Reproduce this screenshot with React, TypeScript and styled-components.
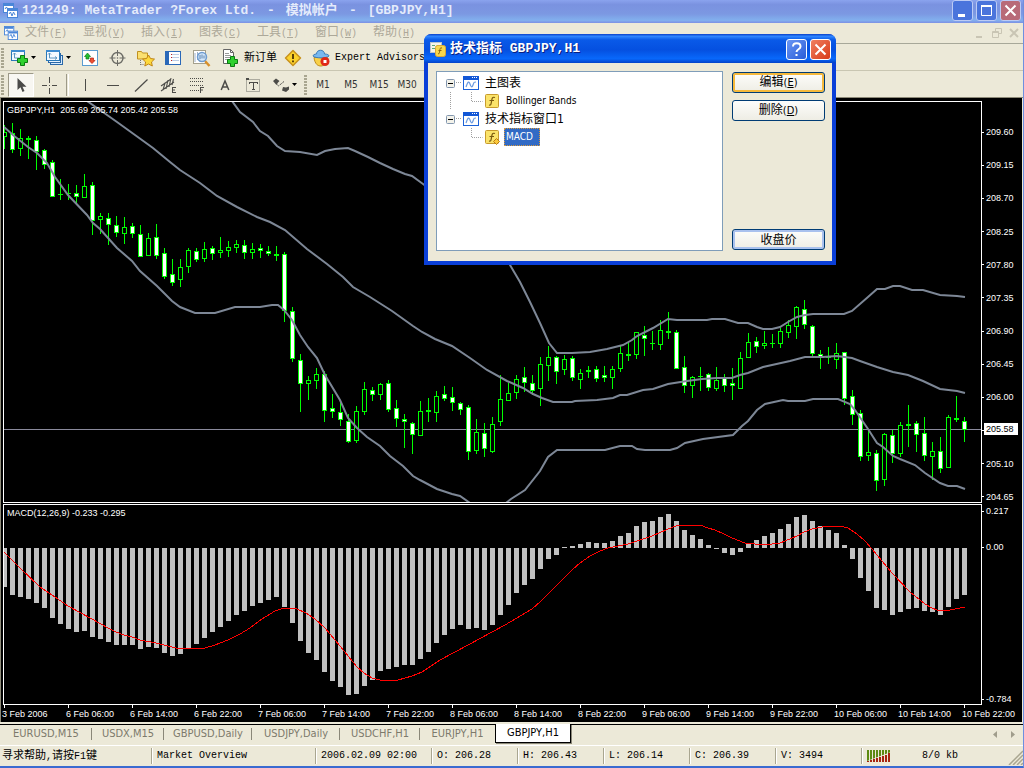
import React from "react";
import styled, { createGlobalStyle, css } from "styled-components";

const uiFont = '"DejaVu Sans Condensed", "Noto Sans CJK SC", sans-serif';
const chartFont = '"Liberation Sans", "Noto Sans CJK SC", sans-serif';
const monoFont = '"Liberation Mono", "Noto Sans CJK SC", monospace';
const face = "#ece9d8";
const bandColor = "#7d8796";
const lime = "#00ff00";

const GlobalStyle = createGlobalStyle`
  * { box-sizing: border-box; }
  html, body { margin: 0; padding: 0; background: ${face}; }
  body { font-family: ${uiFont}; font-size: 12px; line-height: 14px; color: #000; }
  button { font: inherit; color: inherit; margin: 0; padding: 0; border: 0; background: none; }
  ul { list-style: none; margin: 0; padding: 0; }
  svg { display: block; flex: none; }
`;

/* ---------- window shell ---------- */

const Shell = styled.div`
  position: relative;
  display: flex;
  flex-direction: column;
  width: 100%;
  overflow: hidden;
  background: ${face};
  border-right: 1px solid #6d8fe0;
  border-bottom: 3px solid #3a6bd0;
`;

const TitleBar = styled.header`
  display: flex;
  align-items: center;
  height: 23px;
  padding: 0 2px 2px 3px;
  color: #e4ebfb;
  background: linear-gradient(#8aa3ee 0, #7a92e0 20%, #7c98e2 60%, #82b0ee 88%, #7c90e4 100%);
`;

const TitleText = styled.h1`
  flex: 1;
  display: flex;
  gap: 11px;
  margin: 0 0 0 4px;
  font: bold 13px/18px ${monoFont};
  white-space: pre;
`;

const CaptionButton = styled.button<{ $tone: string; $edge?: string }>`
  display: flex;
  align-items: center;
  justify-content: center;
  width: 21px;
  height: 21px;
  margin-left: 3px;
  border: 1px solid ${(p) => p.$edge ?? "#bccbf5"};
  border-radius: 3px;
  background: ${(p) => p.$tone};
`;

const MenuBar = styled.nav`
  display: flex;
  align-items: center;
  height: 21px;
  padding: 0 4px;
  border-bottom: 1px solid #a7a899;
  color: #aca899;
`;

const MenuIconBox = styled.span`
  display: flex;
  width: 13px;
`;

const MenuItem = styled.button`
  width: 58px;
  padding-left: 8px;
  text-align: left;
  font: 12px/18px ${monoFont};
  white-space: nowrap;
`;

const Latin = styled.span`
  font-size: 10px;
`;

const Spacer = styled.span`
  flex: 1;
`;

const MdiButtons = styled.span`
  display: flex;
  gap: 7px;
  color: #c9c5b4;
`;

/* ---------- toolbars ---------- */

const Toolbar = styled.div<{ $line?: boolean }>`
  display: flex;
  align-items: center;
  gap: 4px;
  height: 27px;
  padding: 1px 0 0 1px;
  border-bottom: 1px solid ${(p) => (p.$line ? "#c9c6b2" : "#8d8a78")};
  white-space: nowrap;
`;

const Handle = styled.span`
  flex: none;
  width: 3px;
  height: 20px;
  background: repeating-linear-gradient(#a9a690 0 2px, ${face} 2px 3px);
`;

const Divider = styled.span`
  flex: none;
  width: 3px;
  height: 22px;
  border-right: 1px solid #fff;
  border-left: 1px solid #9d9a88;
`;

const ToolButton = styled.button<{ $on?: boolean; $label?: boolean }>`
  flex: none;
  display: flex;
  align-items: center;
  justify-content: ${(p) => (p.$label ? "flex-start" : "center")};
  gap: ${(p) => (p.$label ? 5 : 2)}px;
  min-width: 24px;
  height: 24px;
  padding: ${(p) => (p.$label ? "0 0 0 3px" : "0 3px")};
  font: 10px/16px ${monoFont};
  color: #000;
  ${(p) =>
    p.$on &&
    css`
      background: #f8f7f2;
      border: 1px solid #9d9a88;
      border-right-color: #fff;
      border-bottom-color: #fff;
    `}
`;

const PeriodButton = styled(ToolButton)`
  font: 10px/16px ${uiFont};
  color: #333;
  padding: 0;
`;

const Cjk = styled.span`
  font-size: 11px;
`;

/* ---------- chart ---------- */

const ChartArea = styled.main`
  display: flex;
  flex-direction: column;
  gap: 1px;
  margin: 0 1px 0 0;
  padding: 3px 0 0 2px;
  border-left: 1px solid #8d8a78;
  background: #000;
  color: #fff;
  font: 9px/12px ${chartFont};
`;

const Pane = styled.section`
  display: flex;
`;

const Plot = styled.div`
  position: relative;
  flex: 1;
  min-width: 0;
  border: 1px solid #fff;
  svg { width: 100%; }
`;

const PlotCaption = styled.p`
  position: absolute;
  top: 2px;
  left: 3px;
  margin: 0;
  white-space: pre;
`;

const Axis = styled.div<{ $top: number }>`
  position: relative;
  flex: none;
  display: flex;
  flex-direction: column;
  justify-content: space-between;
  width: 40px;
  padding-top: ${(p) => p.$top}px;
`;

const AxisLabel = styled.span`
  display: flex;
  align-items: center;
  gap: 2px;
  height: 12px;
  &::before {
    content: "";
    width: 2px;
    height: 1px;
    background: #fff;
  }
`;

const PriceBadge = styled.span`
  position: absolute;
  left: 2px;
  top: 322px;
  width: 34px;
  height: 12px;
  padding-left: 2px;
  background: #fff;
  color: #000;
`;

const ScaleGap = styled.span<{ $grow: number }>`
  flex: ${(p) => p.$grow} 0 0;
`;

const TimeAxis = styled.ol`
  display: flex;
  height: 17px;
  margin: -1px 0 0 -1px;
  padding: 0;
  list-style: none;
  overflow: hidden;
`;

const TimeTick = styled.li`
  flex: none;
  width: 64px;
  white-space: nowrap;
  &::before {
    content: "";
    display: block;
    width: 1px;
    height: 3px;
    margin-left: 2px;
    background: #fff;
  }
  &:last-child { width: auto; }
`;

/* ---------- bottom bars ---------- */

const TabBar = styled.div`
  display: flex;
  align-items: flex-start;
  height: 22px;
  margin-top: 2px;
  border-top: 1px solid #000;
  border-bottom: 1px solid #fff;
  font-size: 11px;
`;

const Tab = styled.button<{ $w: number; $active?: boolean }>`
  flex: none;
  width: ${(p) => p.$w}px;
  height: 18px;
  text-align: center;
  white-space: nowrap;
  color: #7d7a6c;
  background: linear-gradient(#8a8778, #8a8778) right 3px / 1px 12px no-repeat;
  &:nth-last-child(4) { background: none; }
  ${(p) =>
    p.$active &&
    css`
      height: 19px;
      margin-top: -1px;
      color: #000;
      background: #fff;
      border: 1px solid #000;
      border-top: 0;
      box-shadow: 1px 1px 0 #8a8778;
    `}
`;

const TabScroll = styled.span`
  display: flex;
  gap: 12px;
  padding: 6px 8px 0 0;
`;

const StatusBar = styled.footer`
  display: flex;
  align-items: center;
  height: 20px;
  font: 10px/16px ${monoFont};
  white-space: nowrap;
`;

const StatusCell = styled.span<{ $w: number }>`
  flex: none;
  width: ${(p) => p.$w}px;
  height: 16px;
  padding-left: 5px;
  border-right: 1px solid #a9a690;
  box-shadow: 1px 0 0 #fff;
  &:first-child { padding-left: 2px; }
`;

const Traffic = styled.span`
  flex: 1;
  display: flex;
  align-items: center;
  gap: 31px;
  padding-left: 5px;
`;

/* ---------- dialog ---------- */

const Dialog = styled.section`
  position: absolute;
  left: 424px;
  top: 34px;
  width: 412px;
  border: 4px solid #0a3fd8;
  border-top: 0;
  border-radius: 8px 8px 0 0;
  background: ${face};
`;

const DialogTitle = styled.header`
  display: flex;
  align-items: center;
  height: 29px;
  margin: 0 -4px;
  padding: 1px 5px 0 6px;
  border-radius: 7px 7px 0 0;
  color: #fff;
  background: linear-gradient(#0a3fc8 0, #2f86ff 8%, #0a5ae8 20%, #0550e0 55%, #0868fb 85%, #0342c8 100%);
`;

const DialogHeading = styled.h2`
  flex: 1;
  margin: 0 0 0 4px;
  font: bold 13px/20px ${monoFont};
  text-shadow: 1px 1px 0 #0a1f80;
`;

const DialogBody = styled.div`
  display: flex;
  gap: 9px;
  padding: 8px 7px 10px 8px;
`;

const Tree = styled.ul`
  flex: 1;
  height: 180px;
  border: 1px solid #7f9db9;
  background: #fff;
  &::before {
    content: "";
    display: block;
    height: 2px;
  }
`;

const TreeRow = styled.div`
  display: flex;
  align-items: center;
  height: 18px;
`;

const Expander = styled.button`
  display: block;
  width: 9px;
  height: 9px;
  margin-left: 9px;
`;

const NodeLabel = styled.span<{ $selected?: boolean; $child?: boolean }>`
  margin-left: ${(p) => (p.$child ? 4 : 6)}px;
  font-size: ${(p) => (p.$child ? 10 : 12)}px;
  padding: ${(p) => (p.$child ? "1px 6px 1px 1px" : "0")};
  border: ${(p) => (p.$child ? "1px dotted transparent" : "0")};
  ${(p) =>
    p.$selected &&
    css`
      color: #fff;
      background: #316ac5;
      border-color: #d89a40;
    `}
`;

const Actions = styled.div`
  display: flex;
  flex-direction: column;
  gap: 7px;
  width: 93px;
  padding: 1px 0;
`;

const ActionButton = styled.button<{ $ring?: string }>`
  height: 21px;
  border: 1px solid #003c74;
  border-radius: 3px;
  background: linear-gradient(#fdfdfb, #eeede4);
  box-shadow: inset 0 0 0 2px ${(p) => p.$ring ?? "transparent"};
`;

const KeyHint = styled.span`
  font-size: 11px;
`;

/* ---------- icons ---------- */

const ChartsLogo = ({ size = 15 }: { size?: number }) => (
  <svg width={size} height={size} viewBox="0 0 15 15" fill="#fff" stroke="#4a86d8">
    <rect x="0.5" y="0.5" width="10" height="9" />
    <path d="M1 2h9" strokeWidth="2" />
    <path d="M2 6l1.500-2 1.500 3 1.500-2" fill="none" />
    <rect x="4.500" y="5.500" width="10" height="9" />
    <path d="M5 7h9" strokeWidth="2" />
    <path d="M6 11l1.500-2 1.500 4 1.500-4 1.500 3" fill="none" />
  </svg>
);

const Caret = () => (
  <svg width="5" height="3" viewBox="0 0 5 3"><path d="M0 0h5L2.500 3z" /></svg>
);

const Plus = ({ x, y }: { x: number; y: number }) => (
  <path
    transform={`translate(${x} ${y})`}
    d="M3.500.5h4v3h3v4h-3v3h-4v-3h-3v-4h3z"
    fill="#2fd02f"
    stroke="#0b7a12"
  />
);

const Icon = ({ children, size = 18 }: { children: React.ReactNode; size?: number }) => (
  <svg width={size} height={size} viewBox="0 0 18 18" fill="none">{children}</svg>
);

const NewChartIcon = () => (
  <Icon>
    <rect x="0.5" y="1.500" width="13" height="10" fill="#f4f9ff" stroke="#2a78b8" />
    <path d="M0 2h14" stroke="#3c8ad0" strokeWidth="2" />
    <path d="M3.500 4v5h8M2 5.500l1.500-1.500L5 5.500" stroke="#5a94c0" />
    <Plus x={6} y={6} />
  </Icon>
);
const ProfilesIcon = () => (
  <Icon>
    <rect x="4.500" y="6.500" width="12" height="9" fill="#d8eafc" stroke="#2a68a8" />
    <rect x="2.500" y="4.500" width="12" height="9" fill="#e8f3ff" stroke="#2a68a8" />
    <rect x="0.5" y="1.500" width="13" height="10" fill="#f4f9ff" stroke="#2a78b8" />
    <path d="M0 2h14" stroke="#3c8ad0" strokeWidth="2" />
    <path d="M3.500 4v5h7M2 5.500l1.500-1.500L5 5.500M9 7.500l2 1.500-2 1.500" stroke="#5a94c0" />
  </Icon>
);
const MarketWatchIcon = () => (
  <Icon>
    <rect x="1.500" y="1.500" width="15" height="15" fill="#fff" stroke="#5a9cd0" />
    <path d="M6.500 4l3 3.500H8V10H5V7.500H3.500z" fill="#20c030" stroke="#0f7a1c" strokeWidth=".7" />
    <path d="M11 14.500L8 11.500h1.500V9h3v2.500H14z" fill="#f05030" stroke="#b02010" strokeWidth=".7" />
  </Icon>
);
const TargetIcon = () => (
  <Icon>
    <circle cx="8.500" cy="9" r="5.500" stroke="#6c6c66" strokeWidth="1.400" />
    <path d="M8.500 1v6M8.500 11v6M.5 9h6M10.500 9h6" stroke="#6c6c66" />
    <circle cx="8.500" cy="9" r=".8" fill="#6c6c66" />
  </Icon>
);
const NavigatorIcon = () => (
  <Icon>
    <path d="M.5 2.500h4l1 1.500h5v6h-10z" fill="#fbe070" stroke="#c09020" />
    <path d="M3.500 11v5M3.500 15.500h4" stroke="#777" strokeDasharray="1 1" />
    <path d="M11.500 6l2 3.500 4 .6-3 2.900.8 4-3.800-2-3.700 2 .8-4-3-2.900 4-.6z" fill="#fdd93c" stroke="#c08414" />
  </Icon>
);
const TerminalIcon = () => (
  <Icon>
    <rect x="0.5" y="2.500" width="15" height="13" fill="#fff" stroke="#2a68b8" />
    <path d="M2.500 3v12" stroke="#2a68b8" strokeWidth="3" />
    <path d="M6 5.500h8M6 8.500h8M6 11.500h8" stroke="#b9cbe4" />
    <path d="M6 5.500h1M6 8.500h1M6 11.500h1" stroke="#c02020" />
  </Icon>
);
const TesterIcon = () => (
  <Icon>
    <rect x="0.5" y="1.500" width="12" height="13" fill="#fff" stroke="#a4a08c" />
    <path d="M2 4v9M4.500 3v8M7 5v8" stroke="#9cb0c8" />
    <path d="M12 12l4.500 5" stroke="#d8902c" strokeWidth="2.500" />
    <circle cx="9" cy="8" r="4.500" fill="#cfe5fa" fillOpacity=".85" stroke="#6f9cd0" strokeWidth="1.500" />
    <path d="M7 6v4M9 5.500v4M11 6.500v3" stroke="#5c84b0" />
  </Icon>
);
const NewOrderIcon = () => (
  <Icon>
    <path d="M2.500.5h7l3 3v11h-10z" fill="#fff" stroke="#666" />
    <path d="M9.500.5v3h3" stroke="#666" />
    <path d="M4 4.500h4M4 6.500h6M4 8.500h6M4 10.500h3" stroke="#999" />
    <Plus x={6} y={7} />
  </Icon>
);
const WarningIcon = () => (
  <Icon>
    <path d="M9 1.500L16.500 9 9 16.500 1.500 9z" fill="#fbd22c" stroke="#c8921c" strokeWidth="1.500" strokeLinejoin="round" />
    <path d="M9 5v5M9 11.500v1.800" stroke="#5c4008" strokeWidth="2" />
  </Icon>
);
const ExpertIcon = () => (
  <Icon>
    <path d="M2 8.500c1 7 4 8.500 7 8.500s5.500-3 6.500-8.500z" fill="#f8d048" stroke="#c08c1c" />
    <path d="M4.500 5c0-5 8-5 8 0 3 0 4.500 1 4.500 2-2 2.500-14 2.500-16 0 0-1 1.500-2 3.500-2z" fill="#78b8f0" stroke="#3c7cb8" />
    <circle cx="13" cy="12.500" r="4.500" fill="#e02818" />
    <rect x="11.500" y="11" width="3" height="3" fill="#fff" />
  </Icon>
);
const CursorIcon = () => (
  <Icon><path d="M5.500 2v12l3-2.800L10.500 16l2-1-2-4.300h4z" fill="#4a4a48" /></Icon>
);
const CrosshairIcon = () => (
  <Icon><path d="M8.500 1v6M8.500 12v6M1 9.500h5M11 9.500h5M8 9.500h1" stroke="#4c4c48" /></Icon>
);
const VLineIcon = () => <Icon><path d="M9.500 3v12" stroke="#4c4c48" /></Icon>;
const HLineIcon = () => <Icon><path d="M3 9.500h12" stroke="#4c4c48" /></Icon>;
const TrendIcon = () => <Icon><path d="M3 15.500L15.500 3.500" stroke="#4c4c48" strokeWidth="1.200" /></Icon>;
const ChannelIcon = () => (
  <Icon>
    <path d="M1 10l10-7M1 15l13-9M3 14l2-7M6 13l2-9M9 11l2-9M12 9l1.500-6" stroke="#4c4c48" strokeWidth="1.100" />
    <path d="M12.500 11v6M12 11.500h4M12 14h3M12 16.500h4" stroke="#4c4c48" />
  </Icon>
);
const FiboIcon = () => (
  <Icon>
    <path d="M2 2.500h14M2 5.500h14M2 9.500h14M2 14.500h9" stroke="#4c4c48" strokeDasharray="1 1" />
    <path d="M12.500 11v6M12 11.500h4M12 14h3" stroke="#4c4c48" />
  </Icon>
);
const TextIcon = () => (
  <Icon><path d="M5.200 14L9 5l3.800 9M6.500 11h5" stroke="#4c4c48" strokeWidth="1.500" /></Icon>
);
const LabelIcon = () => (
  <Icon>
    <rect x="2.500" y="3.500" width="13" height="12" stroke="#6c6c66" strokeDasharray="1 1" />
    <path d="M2 3h3" stroke="#4c4c48" strokeWidth="2" />
    <path d="M5.500 6.500h8M9.500 6v8M8 13.500h3M5.500 6v2M13.500 6v2" stroke="#4c4c48" />
  </Icon>
);
const ArrowsIcon = () => (
  <Icon>
    <path d="M1 5l3-2.500L7.500 5 6 6.500 4.500 9z" fill="#4c4c48" />
    <path d="M4 7l2.500 3L12 5.500" stroke="#4c4c48" strokeDasharray="2 1" />
    <path d="M11 11l3 .5 3-1v3l-3 2.500-4-1.500z" fill="#4c4c48" />
  </Icon>
);
const WindowNodeIcon = () => (
  <svg width="16" height="14" viewBox="0 0 16 14" fill="none">
    <rect x="0.5" y="0.5" width="15" height="13" fill="#fff" stroke="#1c62d8" />
    <path d="M0 2h16" stroke="#1257d6" strokeWidth="4" />
    <path d="M9 1.500h1M11 1.500h1M13 1.500h1" stroke="#fff" />
    <path d="M3 11c2-6 3-6 4-3s2 4 3 1 1-3 3-3" stroke="#6b9be0" strokeWidth="1.200" />
  </svg>
);
const FunctionIcon = ({ custom }: { custom?: boolean }) => (
  <svg width="15" height="15" viewBox="0 0 15 15" fill="none">
    <rect x="0.5" y="0.5" width="13" height="13" rx="1" fill="#fbe36a" stroke="#c79a2c" />
    <path d="M10 3.500c-3-1-3 1-3.500 4s-.5 4-2.500 3.500M4.500 6.500h4.500" stroke="#7a5a10" strokeWidth="1.200" />
    {custom && <path d="M11.500 8.500l3 3-3 3-3-3z" fill="#fbc83c" stroke="#b87c14" />}
  </svg>
);
const DialogIcon = () => (
  <svg width="16" height="15" viewBox="0 0 16 15" fill="none">
    <rect x="0.5" y="0.5" width="11" height="10" fill="#f4f4ea" stroke="#b9c4cc" />
    <path d="M2 3.500h3M2 6.500h3M7 3.500h3" stroke="#58a878" />
    <rect x="5.500" y="3.500" width="10" height="11" rx="2" fill="#f8d84c" stroke="#d8a838" />
    <path d="M12 6c-2-.5-2 .5-2.300 3s-.5 3-1.700 2.600M8.500 8.500h3" stroke="#8a6410" />
  </svg>
);

/* ---------- market data ---------- */

type Kind = 0 | 1 | 2; // 0 rising, 1 falling, 2 flat
type Candle = [high: number, low: number, top: number, bottom: number, kind: Kind];

const candles: Candle[] = [
  [125, 149, 132, 137, 0], [123, 153, 133, 150, 1], [129, 156, 138, 149, 0], [136, 159, 138, 140, 2],
  [136, 170, 140, 152, 1], [149, 169, 150, 165, 1], [160, 197, 162, 197, 1], [179, 200, 194, 195, 2],
  [184, 200, 193, 194, 2], [185, 203, 193, 197, 1], [174, 198, 186, 198, 0], [182, 235, 185, 221, 1],
  [213, 234, 216, 220, 0], [213, 245, 218, 225, 1], [216, 237, 225, 233, 1], [217, 244, 227, 234, 0],
  [223, 238, 226, 234, 1], [225, 257, 234, 257, 1], [233, 256, 238, 256, 0], [224, 259, 237, 256, 1],
  [248, 279, 253, 277, 1], [259, 286, 274, 283, 1], [259, 287, 267, 280, 0], [248, 273, 250, 267, 0],
  [248, 262, 251, 260, 1], [242, 262, 249, 259, 0], [246, 260, 248, 254, 1], [237, 258, 250, 253, 0],
  [241, 257, 247, 251, 0], [240, 253, 244, 248, 0], [240, 259, 245, 253, 1], [243, 259, 249, 253, 0],
  [244, 258, 248, 251, 1], [246, 256, 251, 254, 1], [246, 261, 254, 256, 2], [252, 322, 254, 311, 1],
  [307, 362, 311, 359, 1], [354, 412, 360, 384, 1], [376, 400, 380, 384, 0], [368, 389, 374, 381, 0],
  [371, 422, 374, 411, 1], [394, 418, 408, 412, 1], [403, 426, 412, 420, 1], [414, 443, 421, 442, 1],
  [406, 443, 411, 441, 0], [382, 415, 389, 412, 0], [387, 401, 390, 395, 1], [383, 400, 384, 395, 0],
  [380, 412, 383, 410, 1], [400, 427, 408, 419, 1], [414, 448, 419, 422, 1], [422, 454, 423, 435, 1],
  [401, 436, 411, 436, 0], [398, 422, 410, 412, 2], [391, 422, 396, 413, 0], [386, 401, 394, 399, 1],
  [387, 411, 397, 403, 1], [402, 415, 403, 410, 1], [405, 460, 407, 452, 1], [419, 454, 432, 451, 0],
  [423, 457, 433, 449, 1], [417, 453, 424, 452, 0], [375, 426, 399, 422, 0], [383, 401, 393, 401, 0],
  [375, 399, 379, 393, 0], [367, 392, 377, 383, 1], [375, 395, 383, 391, 1], [357, 406, 364, 389, 0],
  [346, 381, 357, 366, 0], [356, 384, 357, 372, 1], [355, 375, 359, 370, 0], [356, 381, 358, 378, 1],
  [369, 389, 373, 380, 0], [366, 378, 370, 372, 2], [366, 382, 369, 379, 1], [366, 382, 375, 378, 1],
  [366, 389, 369, 378, 0], [346, 372, 353, 369, 0], [343, 361, 354, 356, 2], [332, 359, 332, 355, 0],
  [326, 356, 335, 339, 1], [331, 350, 343, 344, 2], [320, 350, 330, 345, 0], [312, 339, 331, 333, 2],
  [330, 369, 332, 369, 1], [356, 393, 367, 386, 1], [376, 398, 377, 386, 0], [367, 391, 376, 377, 2],
  [373, 391, 374, 388, 1], [367, 391, 380, 389, 0], [374, 392, 378, 386, 1], [368, 400, 383, 386, 1],
  [352, 389, 358, 389, 0], [333, 358, 342, 358, 0], [337, 353, 341, 347, 1], [331, 349, 343, 346, 0],
  [334, 348, 343, 344, 2], [328, 348, 331, 344, 0], [320, 338, 325, 333, 0], [306, 339, 307, 327, 0],
  [300, 329, 309, 325, 1], [325, 356, 326, 354, 1], [350, 369, 354, 357, 1], [347, 364, 357, 358, 2],
  [343, 369, 353, 360, 0], [352, 405, 352, 399, 1], [390, 425, 396, 415, 1], [410, 461, 413, 457, 1],
  [431, 461, 452, 456, 0], [450, 491, 453, 481, 1], [433, 486, 434, 480, 0], [430, 463, 435, 454, 1],
  [422, 457, 425, 454, 0], [405, 447, 424, 426, 2], [421, 452, 423, 435, 1], [417, 461, 433, 456, 1],
  [442, 480, 451, 457, 0], [437, 473, 451, 469, 1], [415, 468, 417, 468, 0], [396, 422, 418, 420, 2],
  [417, 442, 421, 430, 1],
];

const upperBand =
  "232,101 240,112 253,122 260,131 268,136 277,146 285,151 300,152 317,155 325,151 335,149 348,148 355,151 368,157 380,163 393,169 405,174 412,176 423,184 460,212 495,242 510,265 520,282 530,302 540,323 549,343 557,353 572,353 590,352 607,349 623,345 632,340 637,336 653,328 668,319 677,320 707,320 712,319 725,319 738,323 748,323 757,327 763,329 772,329 780,327 788,322 797,317 805,315 813,314 844,314 852,311 868,297 877,289 885,289 893,286 900,286 912,290 923,290 940,295 957,296 965,297";
const middleBand =
  "87,101 100,110 117,122 153,148 170,162 180,170 200,183 217,196 237,207 257,217 270,222 285,230 307,249 327,264 343,277 353,287 370,297 392,311 413,326 422,332 435,339 452,346 470,358 487,370 507,381 523,388 533,394 542,398 553,402 572,402 575,401 597,400 613,398 620,395 627,395 643,390 653,389 668,384 687,381 702,379 717,378 732,378 740,375 748,373 763,367 772,365 790,361 805,357 823,357 837,356 852,358 860,361 877,367 893,372 908,375 923,381 940,389 957,391 965,393";
const lowerBand =
  "4,127 13,135 28,147 37,153 47,163 55,177 68,195 87,215 93,223 100,229 117,248 132,261 140,271 157,286 172,301 180,307 195,313 215,313 235,307 260,307 272,305 278,305 284,310 292,320 300,335 308,347 317,358 325,375 340,400 348,418 357,428 367,437 380,446 390,456 403,466 413,476 420,480 437,489 452,494 460,496 470,503 490,512 506,503 511,499 525,490 540,471 548,457 557,450 605,450 620,446 632,446 637,449 645,450 670,450 677,448 685,443 703,439 733,435 742,426 748,421 757,410 765,404 783,400 788,401 805,401 813,399 838,399 850,404 855,410 868,429 877,443 883,447 893,456 900,459 915,465 925,473 940,483 948,486 957,486 965,489";

const macdZero = 548;
const macd = [
  587, 595, 597, 599, 603, 608, 618, 624, 629, 632, 631, 637, 639, 642, 645, 645, 645, 649, 647, 648, 653,
  656, 654, 648, 644, 638, 632, 627, 621, 615, 611, 606, 603, 600, 597, 607, 623, 641, 653, 660, 672, 681,
  687, 695, 694, 686, 680, 671, 669, 667, 665, 665, 659, 652, 643, 635, 629, 625, 629, 628, 630, 625, 615,
  605, 593, 585, 579, 569, 559, 555, 547, 546, 544, 542, 543, 543, 541, 536, 533, 526, 522, 521, 517, 514,
  521, 530, 535, 539, 545, 549, 553, 555, 552, 544, 540, 536, 533, 529, 524, 517, 515, 521, 526, 530, 533,
  545, 559, 578, 591, 608, 610, 615, 612, 609, 608, 611, 612, 615, 607, 599, 595,
];
const signal =
  "4,552 20,568 40,587 55,597 68,606 92,619 108,628 116,632 124,635 132,637 140,640 156,643 176,648 205,648 215,645 228,640 240,634 250,628 262,619 275,611 284,608 297,609 306,613 315,619 325,628 340,646 357,667 364,673 372,678 380,680 388,681 398,680 412,676 422,672 440,660 468,645 505,625 532,609 540,602 556,586 572,570 580,563 590,556 600,551 608,548 628,544 652,536 668,529 676,526 690,525 700,525 708,528 715,530 724,534 732,538 745,543 765,545 780,543 797,536 804,532 812,529 822,527 830,526 840,526 848,528 857,534 865,541 872,549 892,573 910,592 925,604 932,608 937,610 950,610 965,607";

const barX = (i: number) => 4 + i * 8;

const PricePlot = () => (
  <svg height="400" viewBox="4 102 977 400" preserveAspectRatio="xMinYMin slice" role="img" aria-label="GBPJPY H1">
    <g shapeRendering="crispEdges">
      <rect x="4" y="429" width="977" height="1" fill="#8a8a9c" />
      {candles.map(([high, low, top, bottom, kind], i) => (
        <g key={i}>
          <rect x={barX(i)} y={high} width="1" height={low - high} fill={lime} />
          <rect x={barX(i) - 2} y={top} width="5" height={bottom - top} fill={lime} />
          {kind !== 2 && (
            <rect
              x={barX(i) - 1}
              y={top + 1}
              width="3"
              height={Math.max(bottom - top - 2, 1)}
              fill={kind === 1 ? "#fff" : "#000"}
            />
          )}
        </g>
      ))}
    </g>
    <g fill="none" stroke={bandColor} strokeWidth="2">
      <polyline points={upperBand} />
      <polyline points={middleBand} />
      <polyline points={lowerBand} />
    </g>
  </svg>
);

const MacdPlot = () => (
  <svg height="199" viewBox="4 505 977 199" preserveAspectRatio="xMinYMin slice" role="img" aria-label="MACD">
    <g shapeRendering="crispEdges" fill="#c0c0c0">
      {macd.map((v, i) => (
        <rect key={i} x={barX(i) - 2} y={Math.min(v, macdZero)} width="5" height={Math.abs(v - macdZero)} />
      ))}
    </g>
    <polyline points={signal} fill="none" stroke="#f00" strokeWidth="1" shapeRendering="crispEdges" />
  </svg>
);

const prices = ["209.60", "209.15", "208.70", "208.25", "207.80", "207.35", "206.90", "206.45", "206.00", "", "205.10", "204.65"];
const times = [
  "3 Feb 2006", "6 Feb 06:00", "6 Feb 14:00", "6 Feb 22:00", "7 Feb 06:00", "7 Feb 14:00", "7 Feb 22:00",
  "8 Feb 06:00", "8 Feb 14:00", "8 Feb 22:00", "9 Feb 06:00", "9 Feb 14:00", "9 Feb 22:00",
  "10 Feb 06:00", "10 Feb 14:00", "10 Feb 22:00",
];
const menus = [["文件", "F"], ["显视", "V"], ["插入", "I"], ["图表", "C"], ["工具", "T"], ["窗口", "W"], ["帮助", "H"]];
const tabs: [string, number][] = [
  ["EURUSD,M15", 92], ["USDX,M15", 72], ["GBPUSD,Daily", 88], ["USDJPY,Daily", 88], ["USDCHF,H1", 80], ["EURJPY,H1", 75],
];

const Branch = ({ more }: { more?: boolean }) => (
  <svg width="48" height="18" fill="none" stroke="#a0a0a0" strokeDasharray="1 1">
    {more && <path d="M13.500 0v18" />}
    <path d="M34.500 0v9.500h11" />
  </svg>
);

const RootNode = ({ label }: { label: React.ReactNode }) => (
  <TreeRow>
    <Expander aria-label="折叠">
      <svg width="9" height="9" viewBox="0 0 9 9" fill="none">
        <rect x="0.5" y="0.5" width="8" height="8" rx="1" fill="#f3f2ea" stroke="#8296ae" />
        <path d="M2 4.500h5" stroke="#000" />
      </svg>
    </Expander>
    <svg width="8" height="2"><path d="M1 .5h6" stroke="#a0a0a0" strokeDasharray="1 1" /></svg>
    <WindowNodeIcon />
    <NodeLabel>{label}</NodeLabel>
  </TreeRow>
);

export default function App() {
  return (
    <Shell>
      <GlobalStyle />
      <TitleBar>
        <ChartsLogo />
        <TitleText>
          <span>121249: MetaTrader ?Forex Ltd.</span>
          <span>-</span>
          <span>模拟帐户</span>
          <span>-</span>
          <span>[GBPJPY,H1]</span>
        </TitleText>
        <CaptionButton $tone="#4a74dc" aria-label="最小化">
          <svg width="13" height="13"><path d="M2 10h7v3H2z" fill="#fff" /></svg>
        </CaptionButton>
        <CaptionButton $tone="#4a74dc" aria-label="还原">
          <svg width="13" height="13" fill="none" stroke="#fff"><path d="M1.500 1.500h10v10h-10z" /><path d="M1 2h11" strokeWidth="2" /></svg>
        </CaptionButton>
        <CaptionButton $tone="#b86a78" aria-label="关闭">
          <svg width="13" height="13"><path d="M1.500 1.500l10 10M11.500 1.500l-10 10" stroke="#fff" strokeWidth="2" /></svg>
        </CaptionButton>
      </TitleBar>

      <MenuBar>
        <MenuIconBox><ChartsLogo size={14} /></MenuIconBox>
        {menus.map(([name, key]) => (
          <MenuItem key={key}>{name}<Latin>(<u>{key}</u>)</Latin></MenuItem>
        ))}
        <Spacer />
        <MdiButtons>
          <svg width="10" height="10"><path d="M1 8h6v2H1z" fill="currentColor" /></svg>
          <svg width="10" height="10" fill="none" stroke="currentColor"><path d="M3.500 3V.5h6v5H7M.5 3.500h6v6h-6zM.5 4.500h6" /></svg>
          <svg width="10" height="10"><path d="M1 1l8 8M9 1L1 9" stroke="currentColor" strokeWidth="2" /></svg>
        </MdiButtons>
      </MenuBar>

      <Toolbar $line>
        <Handle />
        <ToolButton aria-label="新图表"><NewChartIcon /><Caret /></ToolButton>
        <ToolButton aria-label="配置"><ProfilesIcon /><Caret /></ToolButton>
        <ToolButton aria-label="市场报价"><MarketWatchIcon /></ToolButton>
        <ToolButton aria-label="数据窗口"><TargetIcon /></ToolButton>
        <ToolButton aria-label="导航"><NavigatorIcon /></ToolButton>
        <ToolButton aria-label="终端"><TerminalIcon /></ToolButton>
        <ToolButton aria-label="测试"><TesterIcon /></ToolButton>
        <ToolButton $label><NewOrderIcon /><Cjk>新订单</Cjk></ToolButton>
        <ToolButton aria-label="警告"><WarningIcon /></ToolButton>
        <ToolButton $label><ExpertIcon />Expert Advisors</ToolButton>
      </Toolbar>

      <Toolbar>
        <Handle />
        <ToolButton $on aria-label="光标"><CursorIcon /></ToolButton>
        <ToolButton aria-label="十字"><CrosshairIcon /></ToolButton>
        <Divider />
        <ToolButton aria-label="垂直线"><VLineIcon /></ToolButton>
        <ToolButton aria-label="水平线"><HLineIcon /></ToolButton>
        <ToolButton aria-label="趋势线"><TrendIcon /></ToolButton>
        <ToolButton aria-label="通道"><ChannelIcon /></ToolButton>
        <ToolButton aria-label="斐波纳契"><FiboIcon /></ToolButton>
        <ToolButton aria-label="文本"><TextIcon /></ToolButton>
        <ToolButton aria-label="标签"><LabelIcon /></ToolButton>
        <ToolButton aria-label="箭头"><ArrowsIcon /><Caret /></ToolButton>
        <Handle />
        <PeriodButton>M1</PeriodButton>
        <PeriodButton>M5</PeriodButton>
        <PeriodButton>M15</PeriodButton>
        <PeriodButton>M30</PeriodButton>
      </Toolbar>

      <ChartArea>
        <Pane>
          <Plot>
            <PricePlot />
            <PlotCaption>GBPJPY,H1  205.69 205.74 205.42 205.58</PlotCaption>
          </Plot>
          <Axis $top={25}>
            {prices.map((p, i) => <AxisLabel key={i}>{p}</AxisLabel>)}
            <PriceBadge>205.58</PriceBadge>
          </Axis>
        </Pane>
        <Pane>
          <Plot>
            <MacdPlot />
            <PlotCaption>MACD(12,26,9) -0.233 -0.295</PlotCaption>
          </Plot>
          <Axis $top={1}>
            <AxisLabel>0.217</AxisLabel>
            <ScaleGap $grow={24} />
            <AxisLabel>0.00</AxisLabel>
            <ScaleGap $grow={138} />
            <AxisLabel>-0.784</AxisLabel>
          </Axis>
        </Pane>
        <TimeAxis>
          {times.map((t) => <TimeTick key={t}>{t}</TimeTick>)}
        </TimeAxis>
      </ChartArea>

      <TabBar>
        {tabs.map(([name, w]) => <Tab key={name} $w={w}>{name}</Tab>)}
        <Tab $w={76} $active>GBPJPY,H1</Tab>
        <Spacer />
        <TabScroll>
          <svg width="5" height="8"><path d="M4 0v7L0 3.500z" fill="#a09d8c" /></svg>
          <svg width="5" height="8"><path d="M1 0v7l4-3.500z" fill="#a09d8c" /></svg>
        </TabScroll>
      </TabBar>

      <StatusBar>
        <StatusCell $w={152}><Cjk>寻求帮助</Cjk>,<Cjk>请按</Cjk>F1<Cjk>键</Cjk></StatusCell>
        <StatusCell $w={164}>Market Overview</StatusCell>
        <StatusCell $w={116}>2006.02.09 02:00</StatusCell>
        <StatusCell $w={86}>O: 206.28</StatusCell>
        <StatusCell $w={86}>H: 206.43</StatusCell>
        <StatusCell $w={86}>L: 206.14</StatusCell>
        <StatusCell $w={86}>C: 206.39</StatusCell>
        <StatusCell $w={86}>V: 3494</StatusCell>
        <Traffic>
          <svg width="24" height="12" fill="none">
            <path d="M0 6h24" stroke="#5c8a10" strokeWidth="12" strokeDasharray="2 1" />
            <path d="M0 11L24 2v10H0z" fill={face} />
            <path d="M1 12v-1M4 12v-2M7 12v-3M10 12V8M13 12V7M16 12V6M19 12V5M22 12V3" stroke="#a82410" strokeWidth="2" />
          </svg>
          <span>8/0 kb</span>
        </Traffic>
        <svg width="15" height="18" stroke="#a9a690" strokeWidth="1.500"><path d="M1 18L15 4M5 18L15 8M9 18l6-6M13 18l2-2" /></svg>
      </StatusBar>

      <Dialog role="dialog" aria-labelledby="indicators-title">
        <DialogTitle>
          <DialogIcon />
          <DialogHeading id="indicators-title">技术指标 GBPJPY,H1</DialogHeading>
          <CaptionButton $tone="linear-gradient(135deg, #6a96f4, #2a5cd8)" $edge="#fff" aria-label="帮助">
            <svg width="13" height="15" fill="none"><path d="M3 4.500C3 0 10.500 0 10.500 4.500c0 3-4 2.500-4 5.500" stroke="#fff" strokeWidth="2" /><path d="M5.500 12h2v2h-2z" fill="#fff" /></svg>
          </CaptionButton>
          <CaptionButton $tone="linear-gradient(135deg, #f08060, #d83a18)" $edge="#fff" aria-label="关闭">
            <svg width="13" height="13"><path d="M1.500 1.500l10 10M11.500 1.500l-10 10" stroke="#fff" strokeWidth="2" /></svg>
          </CaptionButton>
        </DialogTitle>
        <DialogBody>
          <Tree>
            <li>
              <RootNode label="主图表" />
              <TreeRow><Branch more /><FunctionIcon /><NodeLabel $child>Bollinger Bands</NodeLabel></TreeRow>
            </li>
            <li>
              <RootNode label="技术指标窗口1" />
              <TreeRow><Branch /><FunctionIcon custom /><NodeLabel $child $selected>MACD</NodeLabel></TreeRow>
            </li>
          </Tree>
          <Actions>
            <ActionButton $ring="#f5b93c">编辑<KeyHint>(<u>E</u>)</KeyHint></ActionButton>
            <ActionButton>删除<KeyHint>(<u>D</u>)</KeyHint></ActionButton>
            <Spacer />
            <ActionButton $ring="#a9c1ee">收盘价</ActionButton>
          </Actions>
        </DialogBody>
      </Dialog>
    </Shell>
  );
}
